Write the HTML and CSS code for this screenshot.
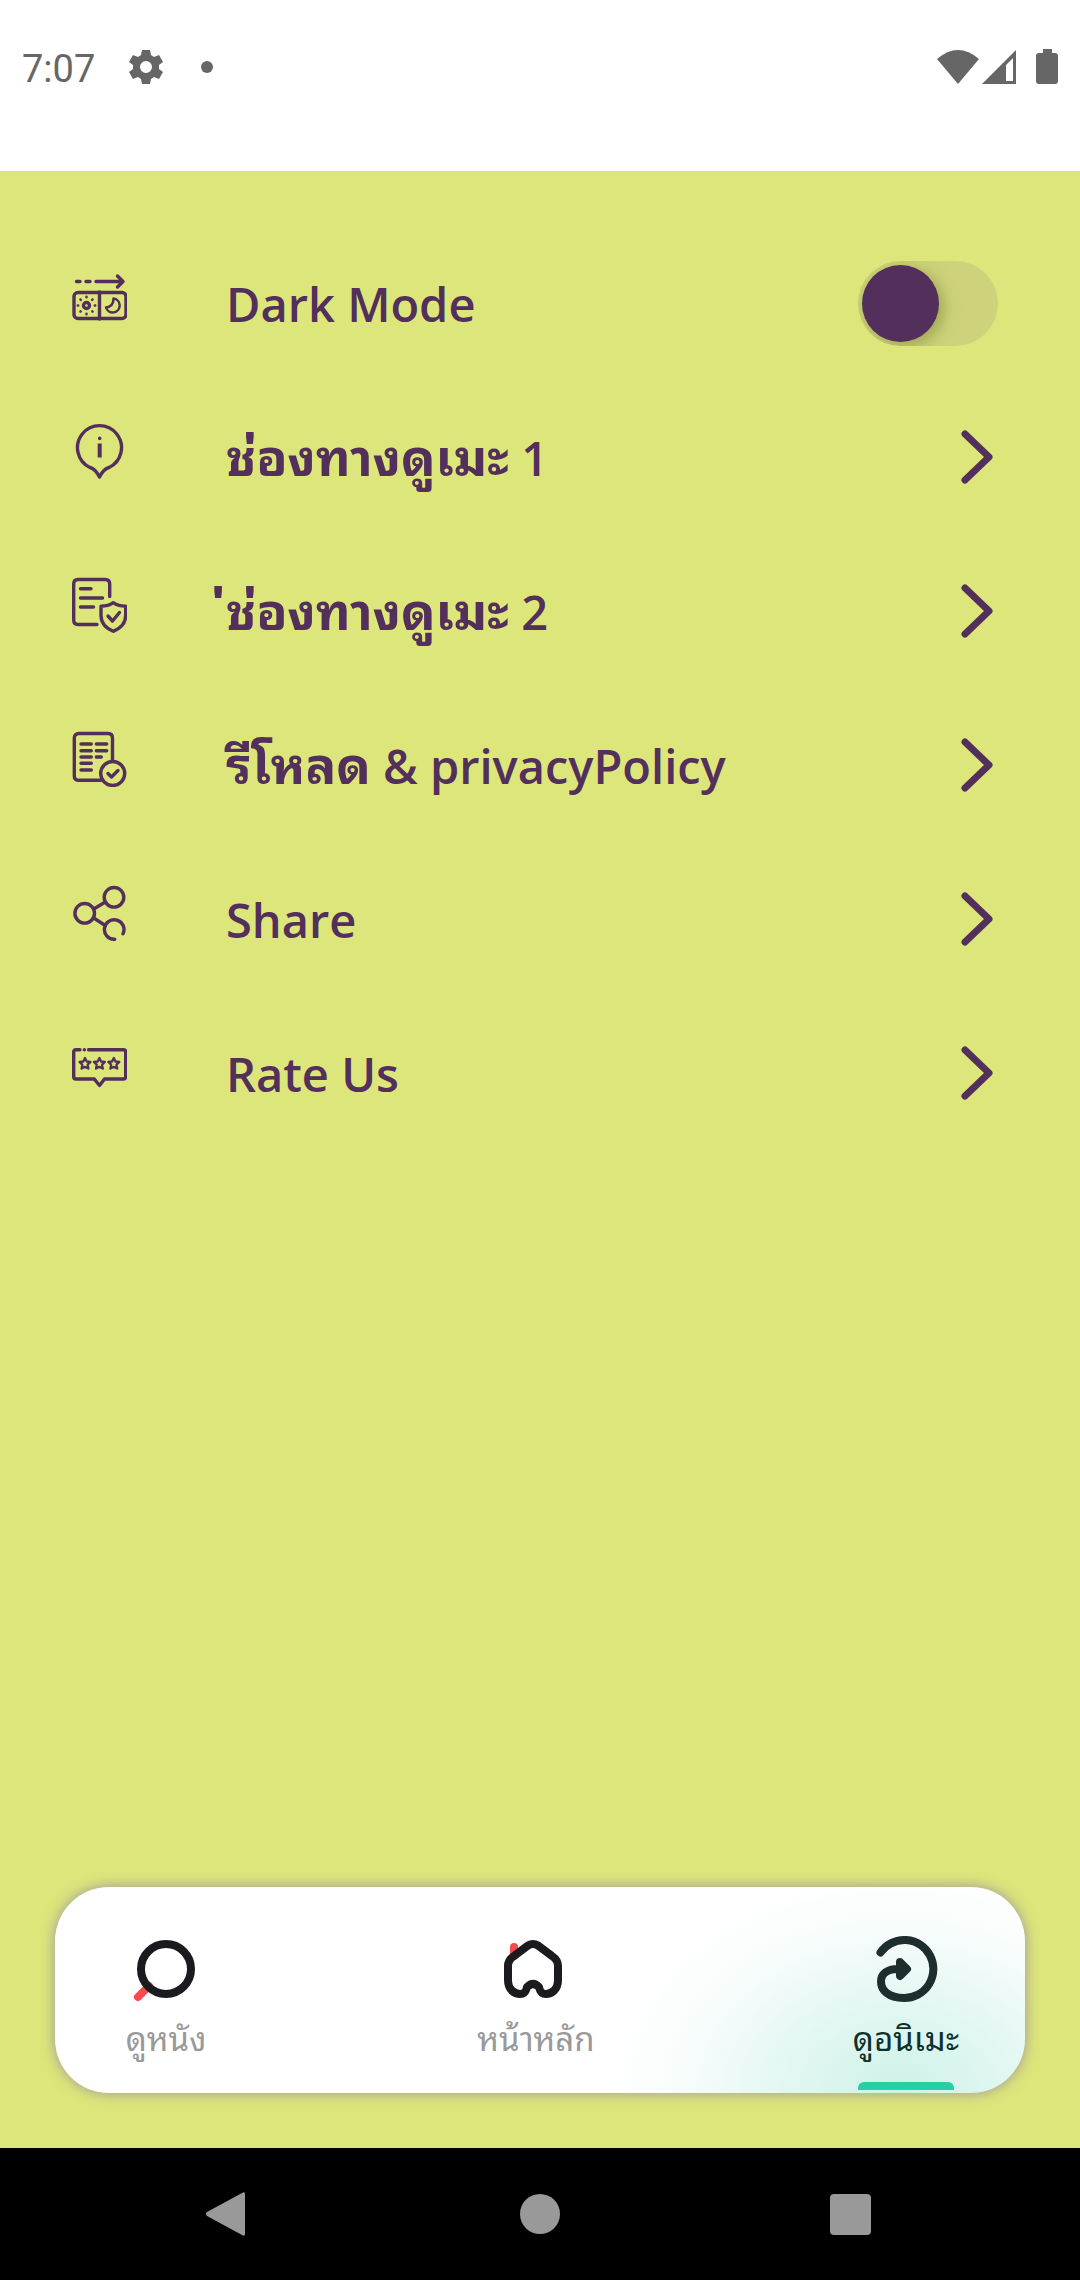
FILE: index.html
```html
<!DOCTYPE html>
<html lang="th">
<head>
<meta charset="utf-8">
<meta name="viewport" content="width=device-width, initial-scale=1">
<title>Settings</title>
<link rel="stylesheet" href="styles.css">
</head>
<body>
<header class="status-bar">
  <time class="clock">7:07</time>
  <svg class="gear" viewBox="0 0 36 36" aria-hidden="true"><path fill-rule="evenodd" d="M14 1h8l1 5 3 2 5-2 4 7-4 3v4l4 3-4 7-5-2-3 2-1 5h-8l-1-5-3-2-5 2-4-7 4-3v-4l-4-3 4-7 5 2 3-2zM18 12a6 6 0 1 0 0 12 6 6 0 0 0 0-12z"/></svg>
  <span class="dot"></span>
  <div class="signals">
    <svg class="wifi" viewBox="0 0 42 36" aria-hidden="true"><path d="M0 10Q21-8 42 10L21 35z"/></svg>
    <svg class="cell" viewBox="0 0 34 36" aria-hidden="true"><path fill-rule="evenodd" d="M0 35L34 1v34zM24 16v16h7V9z"/></svg>
    <svg class="battery" viewBox="0 0 22 36" aria-hidden="true"><path d="M7 0h9v4h3q3 0 3 3v25q0 3-3 3H3q-3 0-3-3V7q0-3 3-3h4z"/></svg>
  </div>
</header>

<main class="settings">
  <div class="row">
    <svg class="row-icon" viewBox="0 0 56 56" aria-hidden="true">
      <rect x="3" y="23.500" width="52" height="26" rx="4"/><path d="M28.500 23v27M5.500 12.500H9M15 12.500h4M25 12.500h27M46.500 7l5.500 5.500-5.500 5.500"/>
      <circle cx="15.500" cy="36.500" r="3"/><path stroke-width="2.500" d="M15.500 27.800v.4M15.500 44.800v.4M6.800 36.500h.4M23.800 36.500h.4M9.500 30.500l.3.300M21.300 42.300l.3.300M21.500 30.500l-.3.300M9.700 42.300l-.3.300"/>
      <path stroke-width="2.500" d="M42.500 29.500a7 7 0 1 1-7.500 9q7.500-1 7.500-9z"/>
    </svg>
    <label class="row-label" for="dark">Dark Mode</label>
    <input class="switch" type="checkbox" role="switch" id="dark">
  </div>
  <button class="row" type="button">
    <svg class="row-icon" viewBox="0 0 56 56" aria-hidden="true"><path d="M28.500 54q-4-8-9.500-9.500a22 22 0 1 1 19 0q-5.500 1.500-9.500 9.500z"/><path stroke-width="3.500" d="M28.700 15.200v.2"/><path stroke-width="4" stroke-linecap="butt" d="M28.700 20.500v14"/></svg>
    <span class="row-label"><span class="thai">ช่องทางดูเมะ</span> 1</span>
    <svg class="chevron" viewBox="0 0 48 64" aria-hidden="true"><path d="M15 9l24 23-24 23"/></svg>
  </button>
  <button class="row" type="button">
    <svg class="row-icon" viewBox="0 0 56 56" aria-hidden="true"><path d="M38.700 19.500V7q0-4.500-4.500-4.500H7Q2.700 2.500 2.700 7v36q0 4.500 4.300 4.500h19M9.500 11.700H20M9.500 21h22M9.500 30h13M42.300 25.700q5 3.500 12.400 3.600v9q0 11-12.400 16Q30 49.300 30 38.300v-9q7.300-.1 12.300-3.600z"/><path d="M37 39l4.500 5 7-8.500"/></svg>
    <span class="row-label"><span class="thai">่ช่องทางดูเมะ</span> 2</span>
    <svg class="chevron" viewBox="0 0 48 64" aria-hidden="true"><path d="M15 9l24 23-24 23"/></svg>
  </button>
  <button class="row" type="button">
    <svg class="row-icon" viewBox="0 0 56 56" aria-hidden="true"><path d="M41.500 29V7q0-4.500-4.500-4.500H8Q3.300 2.500 3.300 7v38q0 4.300 4.700 4.300h22M10 13h10.300M10 19.700h10.300M10 26h10.300M10 32.300h10.300M10 39h10.300M25.300 13h10.400M25.300 19.700h10.400M25.300 26h5"/><circle cx="41.700" cy="42.500" r="12"/><path d="M37 42.500l3.500 3.500 6.500-6.500"/></svg>
    <span class="row-label"><span class="thai">รีโหลด</span> &amp; privacyPolicy</span>
    <svg class="chevron" viewBox="0 0 48 64" aria-hidden="true"><path d="M15 9l24 23-24 23"/></svg>
  </button>
  <button class="row" type="button">
    <svg class="row-icon" viewBox="0 0 56 56" aria-hidden="true"><circle cx="43" cy="12.300" r="9.800"/><circle cx="13.700" cy="28.300" r="9.800"/><path d="M23.500 23.500l10-6M23.500 33.500l10 6.500M43.700 54.300a9.800 9.800 0 1 1 8.300-5.500"/></svg>
    <span class="row-label">Share</span>
    <svg class="chevron" viewBox="0 0 48 64" aria-hidden="true"><path d="M15 9l24 23-24 23"/></svg>
  </button>
  <button class="row" type="button">
    <svg class="row-icon" viewBox="0 0 56 56" aria-hidden="true"><path d="M9 10.700H5q-2.300 0-2.300 2.300v24.500Q2.700 40 5 40h18.300l5.200 6.500 5-6.500H52.500q2.200 0 2.200-2.500V13q0-2.300-2.200-2.300H17.500M13.300 10.700h.1"/><path stroke-width="2.300" d="M14 19l1.700 3.500 3.800.5-2.800 2.700.7 3.900-3.400-1.800-3.400 1.800.7-3.900L8.500 23l3.800-.5zM28.400 19l1.700 3.500 3.800.5-2.800 2.700.7 3.900-3.400-1.800-3.400 1.800.7-3.900-2.800-2.700 3.800-.5zM42.800 19l1.700 3.500 3.800.5-2.800 2.700.7 3.900-3.400-1.800-3.400 1.800.7-3.900-2.800-2.700 3.800-.5z"/></svg>
    <span class="row-label">Rate Us</span>
    <svg class="chevron" viewBox="0 0 48 64" aria-hidden="true"><path d="M15 9l24 23-24 23"/></svg>
  </button>
</main>

<nav class="tabs">
  <button class="tab" type="button">
    <svg class="tab-icon" viewBox="0 0 64 64" aria-hidden="true"><path class="accent" d="M4 60l11-11"/><circle cx="32" cy="32" r="25"/></svg>
    <span class="tab-label">ดูหนัง</span>
  </button>
  <button class="tab" type="button">
    <svg class="tab-icon" viewBox="0 0 64 64" aria-hidden="true"><path class="accent" d="M10 10v9"/><path d="M24 8.500q5-3 10 0l14 10.500q6 4 6 10v14c0 10-7 14-12 14-6 0-6-4-7-7q-6-6-12 0c-1 3-1 7-7 7-5 0-12-4-12-14V29q0-6 6-10z"/></svg>
    <span class="tab-label">หน้าหลัก</span>
  </button>
  <button class="tab tab-active" type="button" aria-current="page">
    <svg class="tab-icon" viewBox="0 0 64 64" aria-hidden="true"><path d="M6.500 15.500A29 29 0 1 1 30 61C14 61 7 53 7 44.500 7 37 13 32 24 32M26 25l7 7-7 7z"/></svg>
    <span class="tab-label">ดูอนิเมะ</span>
  </button>
</nav>

<footer class="system-nav">
  <button class="system-button" type="button" aria-label="Back"><svg viewBox="0 0 48 48"><path d="M38 3q3-2 3 1v40q0 3-3 1L3 26q-2-2 0-4z"/></svg></button>
  <button class="system-button" type="button" aria-label="Home"><svg viewBox="0 0 48 48"><circle cx="24" cy="24" r="20"/></svg></button>
  <button class="system-button" type="button" aria-label="Recents"><svg viewBox="0 0 48 48"><rect x="2" y="4" width="41" height="41" rx="4"/></svg></button>
</footer>
</body>
</html>
```
FILE: styles.css
```css
* {
  box-sizing: border-box;
}

body {
  margin: 0;
  min-height: 100vh;
  display: flex;
  flex-direction: column;
  background: #dde67a;
  color: #532f5c;
  font-family: "Open Sans", "Noto Sans", "Noto Sans Thai Looped", "Noto Looped Thai", Loma, Garuda, "Noto Sans Thai", sans-serif;
}

button {
  margin: 0;
  padding: 0;
  border: 0;
  background: none;
  color: inherit;
  font: inherit;
  cursor: pointer;
}

svg {
  display: block;
  flex: none;
}

.status-bar {
  display: flex;
  align-items: center;
  padding: 40px 22px 77px;
  background: #fff;
  color: #666;
  fill: #666;
}

.clock {
  padding-top: 4px;
  font: 400 38px/50px Roboto, sans-serif;
}

.gear {
  width: 36px;
  height: 36px;
  margin-left: 33px;
}

.dot {
  width: 12px;
  height: 12px;
  margin-left: 37px;
  border-radius: 50%;
  background: #666;
}

.signals {
  display: flex;
  margin-left: auto;
}

.wifi {
  width: 42px;
  height: 36px;
}

.cell {
  width: 34px;
  height: 36px;
  margin-left: 3px;
}

.battery {
  width: 22px;
  height: 36px;
  margin-left: 20px;
}

.settings {
  flex: 1;
  padding: 55px 82px 55px 71px;
}

.row {
  display: flex;
  align-items: center;
  width: 100%;
  height: 154px;
  text-align: left;
}

.row-icon {
  width: 56px;
  height: 56px;
  margin-bottom: 12px;
  fill: none;
  stroke: #532f5c;
  stroke-width: 3.4;
  stroke-linecap: round;
  stroke-linejoin: round;
}

.row-label {
  flex: 1;
  margin-left: 99px;
  padding-top: 2px;
  font-size: 47px;
  font-weight: 600;
  line-height: 64px;
}

.thai {
  font-size: 51px;
  font-weight: 700;
  line-height: 1;
}

.chevron {
  width: 48px;
  height: 64px;
  fill: none;
  stroke: #532f5c;
  stroke-width: 7;
  stroke-linecap: round;
  stroke-linejoin: round;
}

.switch {
  appearance: none;
  flex: none;
  width: 140px;
  height: 85px;
  margin: 0;
  padding: 4px;
  border-radius: 43px;
  background: #ced37b;
  overflow: hidden;
}

.switch::before {
  content: "";
  display: block;
  width: 77px;
  height: 77px;
  border-radius: 50%;
  background: #532f5c;
  box-shadow: 4px 4px 16px rgba(120, 130, 50, 0.6);
}

.switch:checked::before {
  margin-left: auto;
}

.tabs {
  display: flex;
  justify-content: space-between;
  margin: 0 55px 55px;
  padding: 50px 59px 3px 51px;
  border-radius: 54px;
  background: radial-gradient(ellipse 290px 220px at 87% 100%, #cdf2e8, #e3f7f2 40%, #f6fcfb 72%, #fff) #fff;
  box-shadow: 0 0 14px rgba(150, 140, 160, 0.9);
}

.tab {
  display: flex;
  flex-direction: column;
  align-items: center;
  width: 120px;
  color: #999;
}

.tab-icon {
  width: 64px;
  height: 64px;
  overflow: visible;
  fill: none;
  stroke: #1b1b1f;
  stroke-width: 8;
  stroke-linecap: round;
  stroke-linejoin: round;
}

.accent {
  stroke: #f9494f;
}

.tab-label {
  margin-top: 10px;
  font-size: 33px;
  line-height: 56px;
  white-space: nowrap;
}

.tab::after {
  content: "";
  width: 96px;
  height: 8px;
  margin-top: 15px;
  border-radius: 6px 6px 0 0;
}

.tab-active {
  color: #10302b;
}

.tab-active .tab-icon {
  stroke: #1e2d2e;
}

.tab-active::after {
  background: #27d0a3;
}

.system-nav {
  display: flex;
  justify-content: center;
  gap: 264px;
  padding: 42px 0;
  background: #000;
}

.system-button svg {
  width: 48px;
  height: 48px;
  fill: #999;
}
```
